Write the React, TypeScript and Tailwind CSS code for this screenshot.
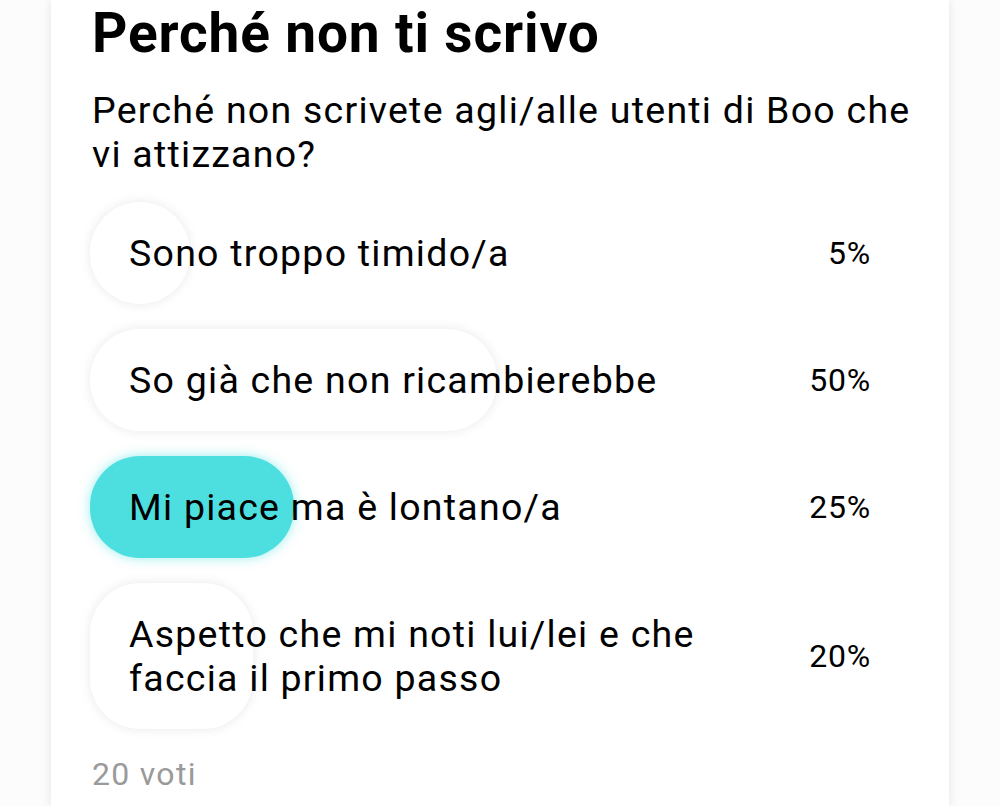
const options = [
  { label: 'Sono troppo timido/a', pct: 5, selected: false },
  { label: 'So già che non ricambierebbe', pct: 50, selected: false },
  { label: 'Mi piace ma è lontano/a', pct: 25, selected: true },
  { label: 'Aspetto che mi noti lui/lei e che faccia il primo passo', pct: 20, selected: false },
];

export default function App() {
  return (
    <div className="min-h-screen bg-[#fdfcfd] px-[51px] font-['Roboto',sans-serif] text-black">
      <div className="min-h-[806px] bg-white pl-[39px] pr-[45px] shadow-[0_0_10px_rgba(0,0,0,0.1)]">
        {/* Title */}
        <h1 className="pl-[2px] pt-[1px] text-[55px] font-bold leading-[64px] tracking-[0.85px]">
          Perché non ti scrivo
        </h1>

        {/* Question */}
        <p className="-mr-[30px] mt-[23px] pl-[2px] text-[37.5px] leading-[44px] tracking-[1.25px]">
          Perché non scrivete agli/alle utenti di Boo che vi attizzano?
        </p>

        {/* Options */}
        <div className="mt-[26px] flex flex-col gap-[25px]">
          {options.map((opt) => (
            <div key={opt.label} className="relative flex items-center">
              <div
                className={`absolute inset-y-0 left-0 min-w-[100px] rounded-[50px] ${
                  opt.selected
                    ? 'bg-[#4ddfdf] shadow-[0_0_12px_rgba(77,223,223,0.55)]'
                    : 'bg-white shadow-[0_0_12px_rgba(0,0,0,0.09)]'
                }`}
                style={{ width: `${opt.pct}%` }}
              />
              <div className="relative flex w-full items-center justify-between py-[29px] pl-[39px] pr-[33px]">
                <span className="max-w-[600px] text-[37.5px] leading-[44px] tracking-[1.25px]">{opt.label}</span>
                <span className="text-[32px] leading-[40px] tracking-[0.8px]">{opt.pct}%</span>
              </div>
            </div>
          ))}
        </div>

        {/* Footer */}
        <p className="mt-[25px] pl-[2px] text-[32px] leading-[40px] tracking-[1.3px] text-[#9a9a9a]">20 voti</p>
      </div>
    </div>
  );
}
